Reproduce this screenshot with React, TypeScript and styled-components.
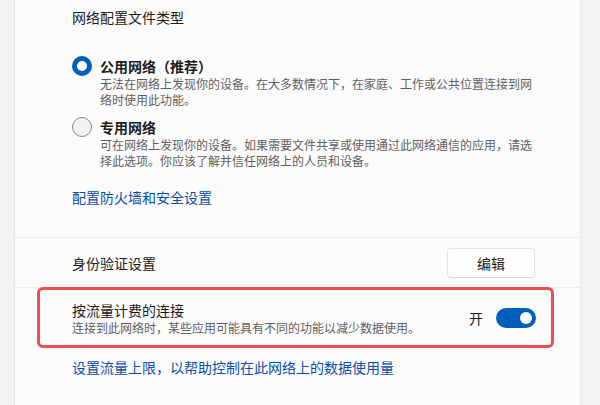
import React from "react";
import styled, { createGlobalStyle } from "styled-components";

const GlobalStyle = createGlobalStyle`
  html, body {
    margin: 0;
    padding: 0;
    background: #f3f3f3;
  }
  body {
    font-family: "Noto Sans CJK SC", "Noto Sans", sans-serif;
    color: #1b1b1b;
  }
`;

const Page = styled.div`
  width: 600px;
  height: 405px;
  overflow: hidden;
  padding-left: 14px;
  box-sizing: border-box;
  background: #f3f3f3;
`;

const Card = styled.div`
  width: 567px;
  min-height: 405px;
  box-sizing: border-box;
  background: #fbfbfb;
  border-left: 1px solid #e6e6e6;
  border-right: 1px solid #e6e6e6;
`;

const Section = styled.div<{ $top: number; $bottom: number }>`
  display: flex;
  flex-direction: column;
  padding: ${(p) => p.$top}px 44px ${(p) => p.$bottom}px 57px;
`;

const Divider = styled.div`
  height: 1px;
  background: #ececec;
`;

const Heading = styled.div`
  font-size: 14px;
  line-height: 20px;
  color: #1b1b1b;
`;

const RadioGroup = styled.div`
  display: flex;
  flex-direction: column;
  gap: 9px;
  margin-top: 29px;
`;

const RadioItem = styled.label`
  display: flex;
  align-items: flex-start;
  gap: 8px;
`;

const RadioCircle = styled.span<{ $checked?: boolean }>`
  flex: none;
  width: 20px;
  height: 20px;
  box-sizing: border-box;
  border-radius: 50%;
  border: ${(p) => (p.$checked ? "5px solid #005fb8" : "1px solid #8b8b8b")};
  background: ${(p) => (p.$checked ? "#ffffff" : "#f2f2f2")};
`;

const RadioText = styled.div`
  display: flex;
  flex-direction: column;
  width: 438px;
`;

const OptionTitle = styled.div`
  font-size: 14px;
  line-height: 20px;
  font-weight: 600;
  color: #1b1b1b;
`;

const Description = styled.div`
  font-size: 12px;
  line-height: 16px;
  color: #5f5f5f;
`;

const Link = styled.a<{ $top: number }>`
  margin-top: ${(p) => p.$top}px;
  font-size: 14px;
  line-height: 20px;
  color: #0a4fa6;
  text-decoration: none;
  cursor: pointer;
  align-self: flex-start;
`;

const SettingRow = styled.div`
  height: 49px;
  display: flex;
  align-items: center;
  justify-content: space-between;
  padding: 0 45px 0 57px;
`;

const Button = styled.button`
  width: 88px;
  height: 30px;
  border: 1px solid #e3e3e3;
  border-bottom-color: #d3d3d3;
  border-radius: 4px;
  background: #fefefe;
  font-family: inherit;
  font-size: 14px;
  color: #1b1b1b;
  padding: 0;
`;

const MeteredRow = styled.div`
  position: relative;
  display: flex;
  align-items: center;
  justify-content: space-between;
`;

const RowText = styled.div`
  display: flex;
  flex-direction: column;
`;

const Highlight = styled.div`
  position: absolute;
  top: -13px;
  bottom: -12px;
  left: -35px;
  right: -18px;
  border: 3px solid #f24b4b;
  border-radius: 6px;
  pointer-events: none;
`;

const ToggleWrap = styled.div`
  display: flex;
  align-items: center;
  gap: 13px;
  font-size: 14px;
  line-height: 20px;
  color: #1b1b1b;
`;

const Toggle = styled.span<{ $on?: boolean }>`
  width: 40px;
  height: 20px;
  border-radius: 10px;
  background: ${(p) => (p.$on ? "#005fb8" : "#f5f5f5")};
  display: flex;
  align-items: center;
  justify-content: ${(p) => (p.$on ? "flex-end" : "flex-start")};
  padding: 0 4px;
  box-sizing: border-box;
`;

const Knob = styled.span`
  width: 12px;
  height: 12px;
  border-radius: 50%;
  background: #ffffff;
`;

const App: React.FC = () => {
  return (
    <>
      <GlobalStyle />
      <Page>
        <Card>
          <Section $top={7} $bottom={30}>
            <Heading>网络配置文件类型</Heading>
            <RadioGroup>
              <RadioItem>
                <RadioCircle $checked />
                <RadioText>
                  <OptionTitle>公用网络（推荐）</OptionTitle>
                  <Description>
                    无法在网络上发现你的设备。在大多数情况下，在家庭、工作或公共位置连接到网络时使用此功能。
                  </Description>
                </RadioText>
              </RadioItem>
              <RadioItem>
                <RadioCircle />
                <RadioText>
                  <OptionTitle>专用网络</OptionTitle>
                  <Description>
                    可在网络上发现你的设备。如果需要文件共享或使用通过此网络通信的应用，请选择此选项。你应该了解并信任网络上的人员和设备。
                  </Description>
                </RadioText>
              </RadioItem>
            </RadioGroup>
            <Link $top={18}>配置防火墙和安全设置</Link>
          </Section>
          <Divider />
          <SettingRow>
            <Heading>身份验证设置</Heading>
            <Button>编辑</Button>
          </SettingRow>
          <Divider />
          <Section $top={12} $bottom={20}>
            <MeteredRow>
              <RowText>
                <Heading>按流量计费的连接</Heading>
                <Description>连接到此网络时，某些应用可能具有不同的功能以减少数据使用。</Description>
              </RowText>
              <ToggleWrap>
                开
                <Toggle $on>
                  <Knob />
                </Toggle>
              </ToggleWrap>
              <Highlight />
            </MeteredRow>
            <Link $top={21}>设置流量上限，以帮助控制在此网络上的数据使用量</Link>
          </Section>
        </Card>
      </Page>
    </>
  );
};

export default App;
